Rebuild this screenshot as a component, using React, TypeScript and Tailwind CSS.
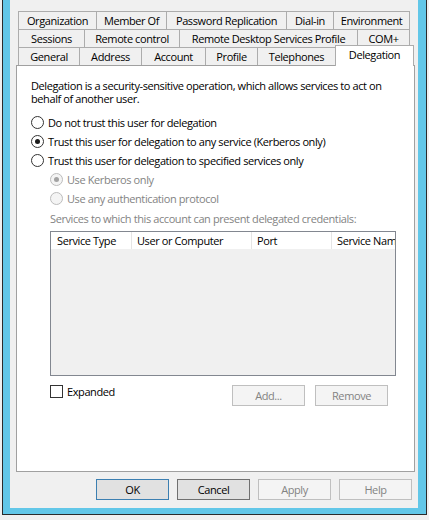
import React from "react";

type Tab = { label: string; w: number; last?: boolean };

const row1: Tab[] = [
  { label: "Organization", w: 78 },
  { label: "Member Of", w: 70 },
  { label: "Password Replication", w: 120 },
  { label: "Dial-in", w: 47 },
  { label: "Environment", w: 77, last: true },
];
const row2: Tab[] = [
  { label: "Sessions", w: 66 },
  { label: "Remote control", w: 95 },
  { label: "Remote Desktop Services Profile", w: 178 },
  { label: "COM+", w: 53, last: true },
];
const row3: Tab[] = [
  { label: "General", w: 61 },
  { label: "Address", w: 62 },
  { label: "Account", w: 64 },
  { label: "Profile", w: 52 },
  { label: "Telephones", w: 78 },
];

function TabRow({ tabs, children }: { tabs: Tab[]; children?: React.ReactNode }) {
  return (
    <div className="flex h-[18px] ml-[2px]">
      {tabs.map((t) => (
        <div
          key={t.label}
          style={{ width: t.w }}
          className={
            "h-[18px] flex items-center justify-center whitespace-nowrap border-t border-l border-[#acacac] bg-[#f0f0f0] text-black " +
            (t.last ? "border-r" : "")
          }
        >
          {t.label}
        </div>
      ))}
      {children}
    </div>
  );
}

function Radio({ checked, disabled }: { checked?: boolean; disabled?: boolean }) {
  return (
    <div
      className={
        "w-[13px] h-[13px] rounded-full border flex items-center justify-center shrink-0 " +
        (disabled ? "border-[#bcbcbc] bg-[#f4f4f4]" : "border-[#333333] bg-white")
      }
    >
      {checked && (
        <div className={"w-[5px] h-[5px] rounded-full " + (disabled ? "bg-[#a3a3a3]" : "bg-[#1a1a1a]")} />
      )}
    </div>
  );
}

function Btn({ label, kind }: { label: string; kind: "default" | "normal" | "disabled" }) {
  const cls =
    kind === "default"
      ? "border-[#3c7fb1] bg-[#e1e1e1] text-black"
      : kind === "normal"
      ? "border-[#707070] bg-[#e1e1e1] text-black"
      : "border-[#bfbfbf] bg-[#f4f4f4] text-[#838383]";
  return (
    <div className={"w-[73px] h-[21px] border flex items-center justify-center " + cls}>{label}</div>
  );
}

export default function App() {
  return (
    <div className="w-[429px] h-[520px] bg-[#f0f0f0] pl-[2px] pr-[2px] pb-[5px] flex font-['Open_Sans','Liberation_Sans',sans-serif] text-[11px] leading-[13px] tracking-[-0.4px]">
      <div className="flex-1 flex border-l border-r border-b border-[#2b2b2b] bg-[#62c7e8] pl-[7px] pr-[8px] pb-[6px]">
        <div className="flex-1 bg-[#f0f0f0] flex flex-col pt-[11px] pl-[6px]">
          {/* tab strip */}
          <div className="w-[399px]">
            <TabRow tabs={row1} />
            <TabRow tabs={row2} />
            <TabRow tabs={row3}>
              <div className="relative z-10 -mt-[2px] w-[79px] h-[21px] bg-white border-t border-l border-r border-[#acacac] flex items-center justify-center pb-[3px] text-black">
                Delegation
              </div>
            </TabRow>
            {/* panel */}
            <div className="h-[407px] border border-[#a0a0a0] bg-white flex flex-col text-black">
              <div className="pl-[14px] pt-[13px] whitespace-nowrap">
                Delegation is a security-sensitive operation, which allows services to act on
                <br />
                behalf of another user.
              </div>
              <div className="mt-[8px] pl-[14px] flex flex-col">
                <div className="h-[19px] flex items-center gap-[4px]">
                  <Radio />
                  <span>Do not trust this user for delegation</span>
                </div>
                <div className="h-[19px] flex items-center gap-[4px]">
                  <Radio checked />
                  <span>Trust this user for delegation to any service (Kerberos only)</span>
                </div>
                <div className="h-[19px] flex items-center gap-[4px]">
                  <Radio />
                  <span>Trust this user for delegation to specified services only</span>
                </div>
              </div>
              <div className="pl-[33px] flex flex-col text-[#838383]">
                <div className="h-[19px] flex items-center gap-[4px]">
                  <Radio checked disabled />
                  <span>Use Kerberos only</span>
                </div>
                <div className="h-[19px] flex items-center gap-[4px]">
                  <Radio disabled />
                  <span>Use any authentication protocol</span>
                </div>
                <div className="mt-[4px]">Services to which this account can present delegated credentials:</div>
              </div>
              {/* list */}
              <div className="ml-[33px] mt-[6px] w-[346px] h-[145px] border border-[#828790] bg-[#f0f0f0] flex flex-col overflow-hidden">
                <div className="h-[17px] bg-white flex whitespace-nowrap text-black">
                  <div className="w-[81px] shrink-0 border-r border-[#e5e5e5] pl-[6px] flex items-center">Service Type</div>
                  <div className="w-[120px] shrink-0 border-r border-[#e5e5e5] pl-[5px] flex items-center">User or Computer</div>
                  <div className="w-[80px] shrink-0 border-r border-[#e5e5e5] pl-[5px] flex items-center">Port</div>
                  <div className="flex-1 min-w-0 pl-[5px] flex items-center overflow-hidden">Service Name</div>
                </div>
              </div>
              {/* bottom row */}
              <div className="ml-[33px] mt-[9px] w-[346px] flex items-start">
                <div className="flex items-center gap-[4px] h-[13px]">
                  <div className="w-[13px] h-[13px] border border-[#333333] bg-white" />
                  <span>Expanded</span>
                </div>
                <div className="ml-auto mr-[8px] flex gap-[10px]">
                  <Btn label="Add..." kind="disabled" />
                  <Btn label="Remove" kind="disabled" />
                </div>
              </div>
            </div>
          </div>
          {/* dialog buttons */}
          <div className="mt-[7px] flex gap-[8px] pl-[80px]">
            <Btn label="OK" kind="default" />
            <Btn label="Cancel" kind="normal" />
            <Btn label="Apply" kind="disabled" />
            <Btn label="Help" kind="disabled" />
          </div>
        </div>
      </div>
    </div>
  );
}
